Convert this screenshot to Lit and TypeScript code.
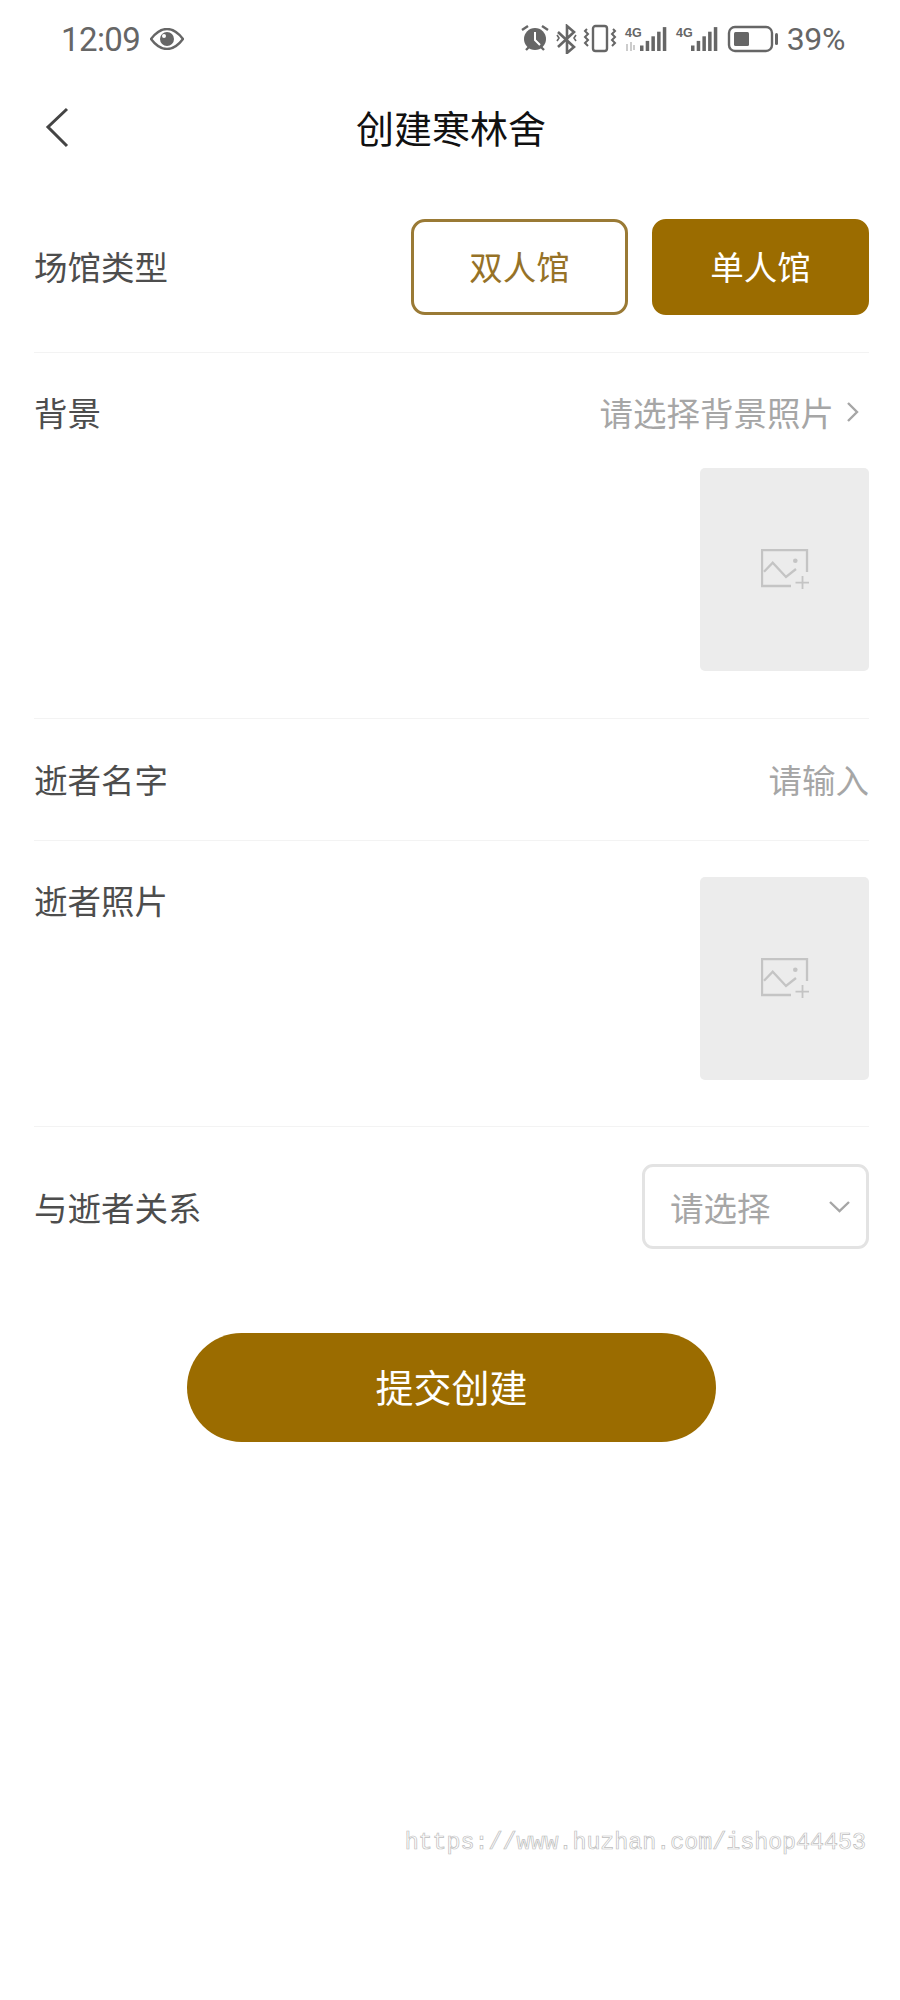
import { LitElement, html, svg, css } from "lit";
import { customElement } from "lit/decorators.js";

const picIcon = html`<svg width="48" height="40" viewBox="0 0 48 40" fill="none" stroke="#c4c4c4" stroke-width="2.3">
  <path d="M30 37H1V1H46V23" />
  <path d="M3 22.7L11.7 13.7L25 28L35 20" />
  <circle cx="34.3" cy="11.7" r="2.3" fill="#c4c4c4" stroke="none" />
  <path d="M34.5 33.7H48M41.5 27V40" stroke-width="1.8" />
</svg>`;

const signal = (x: number, extra = false) => svg`<g transform="translate(${x} 0)">
  <text x="0" y="13" class="g4">4G</text>
  ${[0, 1, 2, 3, 4].map(
    (i) => svg`<rect x=${15 + i * 5.7} y=${21.5 - i * 4.6} width="3.5" height=${5.5 + i * 4.6} fill="#666" />`
  )}
  ${extra ? svg`<path d="M2 20v7M6 18v9M9 21v5" stroke="#ccc" stroke-width="2" fill="none" />` : ""}
</g>`;

@customElement("app-root")
export class AppRoot extends LitElement {
  static styles = css`
    :host {
      display: block;
      width: 900px;
      height: 2000px;
      background: #fff;
      overflow: hidden;
      font-family: "Noto Sans CJK SC", "Noto Sans", sans-serif;
      color: #4d4d4d;
    }
    .status {
      height: 78px;
      display: flex;
      align-items: center;
      padding: 0 55px 0 61px;
      color: #666;
      font-family: Roboto, "Liberation Sans", sans-serif;
      font-size: 33px;
      box-sizing: border-box;
    }
    .time { letter-spacing: -0.6px; margin-right: 10px; }
    .spacer { flex: 1; }
    .pct { margin-left: 8px; font-size: 32px; letter-spacing: -0.4px; }
    .g4 { font: 700 12.5px "Liberation Sans Narrow", "Liberation Sans", sans-serif; fill: #666; }
    .nav {
      height: 100px;
      display: grid;
      grid-template-columns: 1fr auto 1fr;
      align-items: center;
      padding-left: 44px;
      box-sizing: border-box;
      font-size: 38px;
      color: #111;
      line-height: 1;
    }
    .title { padding-bottom: 3px; margin-left: -42px; }
    .rows { padding: 0 31px 0 34px; }
    .row {
      display: flex;
      justify-content: space-between;
      border-bottom: 1.5px solid #f3f3f3;
      font-size: 33.5px;
      line-height: 46px;
    }
    .r-type { padding: 41px 0 37px; align-items: center; }
    .r-type > span { padding-bottom: 2px; }
    .r-bg { padding: 36px 0 47px; display: block; }
    .r-name { padding: 37px 0 38px; }
    .r-photo { padding: 36px 0 46px; }
    .r-rel { border-bottom: 0; padding: 37px 0 0; align-items: center; }
    .hint { color: #a6a6a6; }
    .head { display: flex; justify-content: space-between; align-items: center; padding-bottom: 33px; }
    .head .hint { display: flex; align-items: center; gap: 12px; padding-right: 10px; }
    .btns { display: flex; gap: 24px; }
    .btn {
      width: 217px;
      height: 96px;
      box-sizing: border-box;
      border-radius: 14px;
      display: flex;
      align-items: center;
      justify-content: center;
      border: 3px solid #9a7a35;
      color: #967227;
      font-size: 33.5px;
      padding-bottom: 2px;
    }
    .btn.on { background: #9b6c00; border-color: #9b6c00; color: #fff; }
    .up {
      width: 169px;
      height: 203px;
      box-sizing: border-box;
      background: #ececec;
      border-radius: 5px;
      display: flex;
      align-items: center;
      justify-content: center;
      margin-left: auto;
      padding-bottom: 2px;
    }
    .select {
      width: 227px;
      height: 85px;
      box-sizing: border-box;
      border: 3px solid #e3e3e3;
      border-radius: 11px;
      display: flex;
      align-items: center;
      justify-content: space-between;
      padding: 0 16px 0 25px;
      color: #a6a6a6;
    }
    .submit {
      width: 529px;
      height: 109px;
      margin: 84px 0 0 187px;
      padding-bottom: 4px;
      box-sizing: border-box;
      border-radius: 55px;
      background: #9b6c00;
      color: #fff;
      font-size: 38px;
      display: flex;
      align-items: center;
      justify-content: center;
    }
    .mark {
      margin: 381px 34px 0 0;
      text-align: right;
      font-family: "Liberation Mono", monospace;
      font-size: 23.3px;
      line-height: 40px;
      color: #fff;
      -webkit-text-stroke: 0.7px #bdbdbd;
    }
  `;

  render() {
    return html`
      <div class="status">
        <span class="time">12:09</span>
        <svg width="34" height="22" viewBox="0 0 34 22"><path d="M1 11C7 3 12 1 17 1s10 2 16 10c-6 8-11 10-16 10S7 19 1 11z" fill="none" stroke="#666" stroke-width="2.4"/><circle cx="17" cy="11" r="7" fill="#666"/><circle cx="14" cy="8" r="2" fill="#fff"/></svg>
        <span class="spacer"></span>
        <svg width="258" height="30" viewBox="0 0 258 30" fill="none">
          <circle cx="14" cy="15" r="11" fill="#666"/>
          <path d="M14 8v8l5 5" stroke="#fff" stroke-width="2"/>
          <path d="M1 6l6-4M27 6l-6-4M5 26l3-3M23 26l-3-3" stroke="#666" stroke-width="2.4"/>
          <path d="M37 8l16 15-7 6V2l7 6-16 15" stroke="#666" stroke-width="2.6"/>
          <path d="M55 11l-2 3 2 3M36 11l2 3-2 3" stroke="#666" stroke-width="1.6"/>
          <rect x="72" y="2" width="14" height="25" rx="2.5" stroke="#666" stroke-width="2.4"/>
          <path d="M66 5l-2 2 3 3-3 3 3 3-3 3 3 3M92 5l2 2-3 3 3 3-3 3 3 3-3 3" stroke="#666" stroke-width="2"/>
          ${signal(104, true)}
          ${signal(155)}
          <rect x="208" y="3" width="43" height="24" rx="6" stroke="#666" stroke-width="2.4"/>
          <rect x="213" y="8" width="15" height="14" rx="1.5" fill="#666"/>
          <rect x="254" y="9" width="3" height="12" rx="1.5" fill="#666"/>
        </svg>
        <span class="pct">39%</span>
      </div>
      <div class="nav">
        <svg width="26" height="42" viewBox="0 0 26 42" fill="none" stroke="#444" stroke-width="3"><path d="M23 2L4 20l19 19"/></svg>
        <span class="title">创建寒林舍</span>
      </div>
      <div class="rows">
        <div class="row r-type">
          <span>场馆类型</span>
          <div class="btns"><div class="btn">双人馆</div><div class="btn on">单人馆</div></div>
        </div>
        <div class="row r-bg">
          <div class="head">
            <span>背景</span>
            <span class="hint">请选择背景照片<svg width="13" height="22" viewBox="0 0 13 22" fill="none" stroke="#a6a6a6" stroke-width="2.4"><path d="M2 2l9 9-9 9"/></svg></span>
          </div>
          <div class="up">${picIcon}</div>
        </div>
        <div class="row r-name"><span>逝者名字</span><span class="hint">请输入</span></div>
        <div class="row r-photo"><span>逝者照片</span><div class="up">${picIcon}</div></div>
        <div class="row r-rel">
          <span>与逝者关系</span>
          <div class="select">请选择<svg width="21" height="12" viewBox="0 0 21 12" fill="none" stroke="#a6a6a6" stroke-width="2.4"><path d="M1 1l9.5 9L20 1"/></svg></div>
        </div>
      </div>
      <div class="submit">提交创建</div>
      <div class="mark">https://www.huzhan.com/ishop44453</div>
    `;
  }
}
